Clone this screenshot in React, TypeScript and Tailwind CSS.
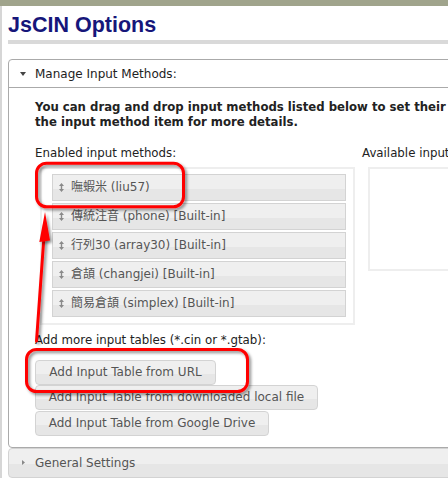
const enabled = [
  '嘸蝦米 (liu57)',
  '傳統注音 (phone) [Built-in]',
  '行列30 (array30) [Built-in]',
  '倉頡 (changjei) [Built-in]',
  '簡易倉頡 (simplex) [Built-in]',
];

const buttons = [
  { label: 'Add Input Table from URL', w: 'w-[181px]', mt: 'mt-[12px]' },
  { label: 'Add Input Table from downloaded local file', w: 'w-[283px]', mt: 'mt-0' },
  { label: 'Add Input Table from Google Drive', w: 'w-[234px]', mt: 'mt-[1px]' },
];

function SortIcon() {
  return (
    <svg width="5" height="9" viewBox="0 0 5 9" className="shrink-0">
      <path d="M2.5 0 L5 3 L3.2 3 L3.2 6 L5 6 L2.5 9 L0 6 L1.8 6 L1.8 3 L0 3 Z" fill="#8a8a8a" />
    </svg>
  );
}

function Annotations() {
  return (
    <svg width="448" height="480" className="absolute left-0 top-0 pointer-events-none">
      <defs>
        <filter id="sh" x="-20%" y="-20%" width="140%" height="140%">
          <feDropShadow dx="2" dy="2" stdDeviation="1.5" floodColor="#000" floodOpacity="0.45" />
        </filter>
      </defs>
      <g filter="url(#sh)" stroke="#ff0000" strokeWidth="3" fill="none">
        <rect x="36.5" y="163.2" width="147" height="43.6" rx="10" />
        <rect x="26.5" y="349.5" width="221" height="42" rx="10" />
        <line x1="36.5" y1="341" x2="44" y2="236" strokeLinecap="round" />
      </g>
      <polygon points="45,212 39.3,242 50,240.5" fill="#ff0000" filter="url(#sh)" />
    </svg>
  );
}

export default function App() {
  return (
    <div className="relative w-[448px] h-[480px] overflow-hidden bg-white font-['DejaVu_Sans','Noto_Sans_CJK_TC',sans-serif]">
      <div className="h-[6px] bg-[#a0a48c]" />
      <div className="flex">
        <div className="w-[2px] shrink-0 bg-[#d6d6d6]" />
        <div className="pl-[6px] w-[600px] shrink-0">
          <h1 className="mt-[6px] h-[26px] leading-[26px] text-[21.5px] font-bold text-[#16167a] font-['Liberation_Sans',Arial,sans-serif]">
            JsCIN Options
          </h1>
          <div className="mt-[2px] h-[4px] bg-[#d9d9d9]" />

          {/* Manage Input Methods */}
          <div className="mt-[15px] border border-[#aaaaaa] rounded-[4px]">
            <div className="h-[28px] flex items-center pl-[11px] border-b border-[#aaaaaa] text-[12px] text-[#222]">
              <svg width="6" height="4" viewBox="0 0 6 4" className="shrink-0">
                <polygon points="0,0 6,0 3,4" fill="#444" />
              </svg>
              <span className="ml-[9px]">Manage Input Methods:</span>
            </div>
            <div className="pt-[11.5px] pl-[26px] pb-[11px] text-[#222]">
              <p className="text-[11.7px] font-bold leading-[15px]">
                You can drag and drop input methods listed below to set their order. Click on
                <br />
                the input method item for more details.
              </p>

              <div className="mt-[16px] flex gap-[4px] text-[11.8px] leading-[15px]">
                <div className="w-[323px] shrink-0">
                  <div>Enabled input methods:</div>
                  <div className="mt-[6px] ml-[5px] w-[315px] border-2 border-[#eeeeee] pt-[5px] pl-[10px] pr-[7px] pb-[6px] flex flex-col gap-[2px]">
                    {enabled.map((name) => (
                      <div
                        key={name}
                        className="h-[27px] flex items-center pl-[6px] border border-[#d3d3d3] bg-[linear-gradient(to_bottom,#efefef_55%,#e6e6e6_55%)] text-[12px] text-[#555]"
                      >
                        <SortIcon />
                        <span className="ml-[7px] whitespace-nowrap">{name}</span>
                      </div>
                    ))}
                  </div>
                </div>
                <div className="w-[200px] shrink-0">
                  <div>Available input methods:</div>
                  <div className="mt-[6px] ml-[6px] h-[104px] border-2 border-[#eeeeee]" />
                </div>
              </div>

              <div className="mt-[8px] text-[11.8px] leading-[15px]">Add more input tables (*.cin or *.gtab):</div>
              <div className="flex flex-col">
                {buttons.map((b) => (
                  <div
                    key={b.label}
                    className={`${b.w} ${b.mt} h-[25px] flex items-center justify-center border border-[#d3d3d3] rounded-[4px] bg-[linear-gradient(to_bottom,#efefef_55%,#e6e6e6_55%)] text-[12px] text-[#555] whitespace-nowrap`}
                  >
                    {b.label}
                  </div>
                ))}
              </div>
            </div>
          </div>

          {/* General Settings */}
          <div className="h-[30px] flex items-center pl-[13px] border border-[#d3d3d3] rounded-[4px] bg-[linear-gradient(to_bottom,#efefef_55%,#e6e6e6_55%)] text-[12px] text-[#555]">
            <svg width="3" height="5" viewBox="0 0 3 5" className="shrink-0">
              <polygon points="0,0 3,2.5 0,5" fill="#888" />
            </svg>
            <span className="ml-[10px]">General Settings</span>
          </div>
        </div>
      </div>
      <Annotations />
    </div>
  );
}
